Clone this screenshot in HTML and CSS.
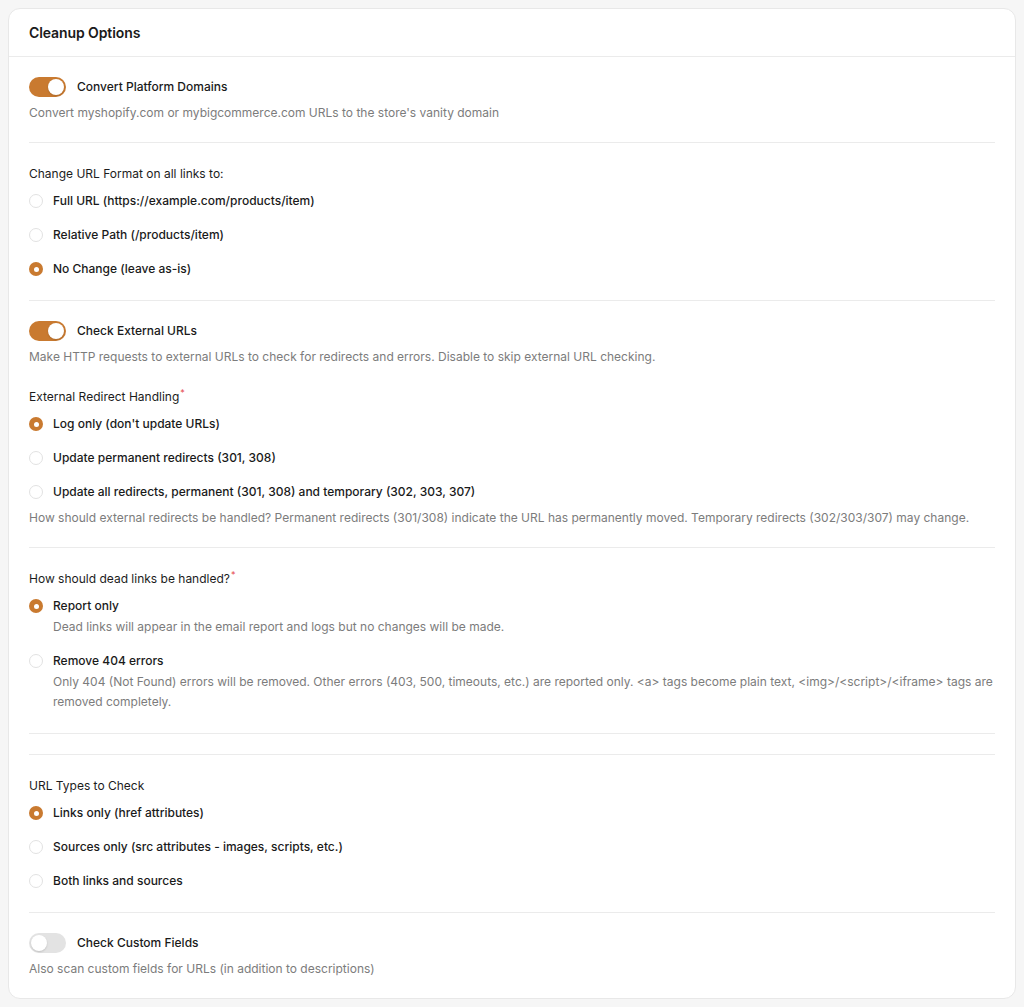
FILE: index.html
```html
<!DOCTYPE html>
<html lang="en">
<head>
<meta charset="utf-8">
<title>Cleanup Options</title>
<link rel="stylesheet" href="styles.css">
</head>
<body>
<div class="card">
  <div class="card-header">Cleanup Options</div>
  <div class="card-body">
    <section class="section">
      <div class="toggle-row">
        <span class="toggle on"><span class="knob"></span></span>
        <span class="toggle-label">Convert Platform Domains</span>
      </div>
      <p class="desc after-toggle">Convert myshopify.com or mybigcommerce.com URLs to the store's vanity domain</p>
    </section>

    <section class="section">
      <div class="heading">Change URL Format on all links to:</div>
      <div class="options">
        <div class="option"><span class="radio"></span><span class="opt-label">Full URL (https://example.com/products/item)</span></div>
        <div class="option"><span class="radio"></span><span class="opt-label">Relative Path (/products/item)</span></div>
        <div class="option"><span class="radio checked"></span><span class="opt-label">No Change (leave as-is)</span></div>
      </div>
    </section>

    <section class="section">
      <div class="toggle-row">
        <span class="toggle on"><span class="knob"></span></span>
        <span class="toggle-label">Check External URLs</span>
      </div>
      <p class="desc after-toggle">Make HTTP requests to external URLs to check for redirects and errors. Disable to skip external URL checking.</p>
      <div class="heading spaced">External Redirect Handling<span class="req">*</span></div>
      <div class="options">
        <div class="option"><span class="radio checked"></span><span class="opt-label">Log only (don't update URLs)</span></div>
        <div class="option"><span class="radio"></span><span class="opt-label">Update permanent redirects (301, 308)</span></div>
        <div class="option"><span class="radio"></span><span class="opt-label">Update all redirects, permanent (301, 308) and temporary (302, 303, 307)</span></div>
      </div>
      <p class="desc after-toggle">How should external redirects be handled? Permanent redirects (301/308) indicate the URL has permanently moved. Temporary redirects (302/303/307) may change.</p>
    </section>

    <section class="section">
      <div class="heading">How should dead links be handled?<span class="req">*</span></div>
      <div class="options">
        <div class="option-block">
          <div class="option"><span class="radio checked"></span><span class="opt-label">Report only</span></div>
          <p class="desc opt-desc">Dead links will appear in the email report and logs but no changes will be made.</p>
        </div>
        <div class="option-block">
          <div class="option"><span class="radio"></span><span class="opt-label">Remove 404 errors</span></div>
          <p class="desc opt-desc">Only 404 (Not Found) errors will be removed. Other errors (403, 500, timeouts, etc.) are reported only. &lt;a&gt; tags become plain text, &lt;img&gt;/&lt;script&gt;/&lt;iframe&gt; tags are removed completely.</p>
        </div>
      </div>
    </section>

    <section class="section empty"></section>

    <section class="section">
      <div class="heading">URL Types to Check</div>
      <div class="options">
        <div class="option"><span class="radio checked"></span><span class="opt-label">Links only (href attributes)</span></div>
        <div class="option"><span class="radio"></span><span class="opt-label">Sources only (src attributes - images, scripts, etc.)</span></div>
        <div class="option"><span class="radio"></span><span class="opt-label">Both links and sources</span></div>
      </div>
    </section>

    <section class="section">
      <div class="toggle-row">
        <span class="toggle"><span class="knob"></span></span>
        <span class="toggle-label">Check Custom Fields</span>
      </div>
      <p class="desc after-toggle">Also scan custom fields for URLs (in addition to descriptions)</p>
    </section>
  </div>
</div>
</body>
</html>
```

FILE: styles.css
```css
* { box-sizing: border-box; }

html, body {
  margin: 0;
  padding: 0;
  background: #f6f6f6;
}

body {
  padding: 8px;
  font-family: Inter, "Noto Sans", sans-serif;
  font-size: 12px;
  line-height: 20px;
  color: #1c1c1c;
}

.card {
  background: #fff;
  border: 1px solid #e8e8e8;
  border-radius: 12px;
  width: 1008px;
}

.card-header {
  height: 48px;
  padding: 0 20px;
  display: flex;
  align-items: center;
  font-size: 14px;
  font-weight: 600;
  letter-spacing: -0.1px;
  color: #1a1a1a;
  border-bottom: 1px solid #ebebeb;
}

.card-body {
  padding: 0 20px;
}

.section {
  padding: 20px 0 19px;
  border-top: 1px solid #ebebeb;
}

.section:first-child {
  border-top: none;
}

.section.empty {
  padding: 0;
  height: 21px;
}

.toggle-row {
  display: flex;
  align-items: center;
  gap: 11px;
  height: 20px;
}

.toggle {
  width: 37px;
  height: 20px;
  border-radius: 10px;
  background: #e3e3e3;
  display: flex;
  align-items: center;
  padding: 2px;
  flex: none;
}

.toggle .knob {
  width: 16px;
  height: 16px;
  border-radius: 50%;
  background: #fff;
  box-shadow: 0 1px 2px rgba(0,0,0,0.15);
}

.toggle.on {
  background: #c97a30;
  justify-content: flex-end;
}

.toggle-label {
  font-weight: 500;
  color: #1a1a1a;
}

.desc {
  margin: 0;
  color: #7c7c7c;
}

.desc.after-toggle {
  margin-top: 6px;
}

.heading {
  color: #1c1c1c;
  font-weight: 400;
}

.heading:first-child {
  margin-top: 1px;
}

.heading.spaced {
  margin-top: 20px;
}

.req {
  color: #e5484d;
  font-size: 9px;
  vertical-align: top;
  line-height: 12px;
  margin-left: 1px;
}

.options {
  margin-top: 7px;
  display: flex;
  flex-direction: column;
  gap: 14px;
}

.options:last-child {
  margin-bottom: 2px;
}

.option {
  display: flex;
  align-items: center;
  gap: 10px;
  height: 20px;
}

.radio {
  width: 14px;
  height: 14px;
  border-radius: 50%;
  border: 1px solid #e2e2e2;
  background: #fff;
  flex: none;
  display: flex;
  align-items: center;
  justify-content: center;
}

.radio.checked {
  border: none;
  background: #c97a30;
}

.radio.checked::after {
  content: "";
  width: 5px;
  height: 5px;
  border-radius: 50%;
  background: #fff;
}

.opt-label {
  font-weight: 500;
  color: #1a1a1a;
}

.opt-desc {
  padding-left: 24px;
  margin-top: 1px;
}
```
